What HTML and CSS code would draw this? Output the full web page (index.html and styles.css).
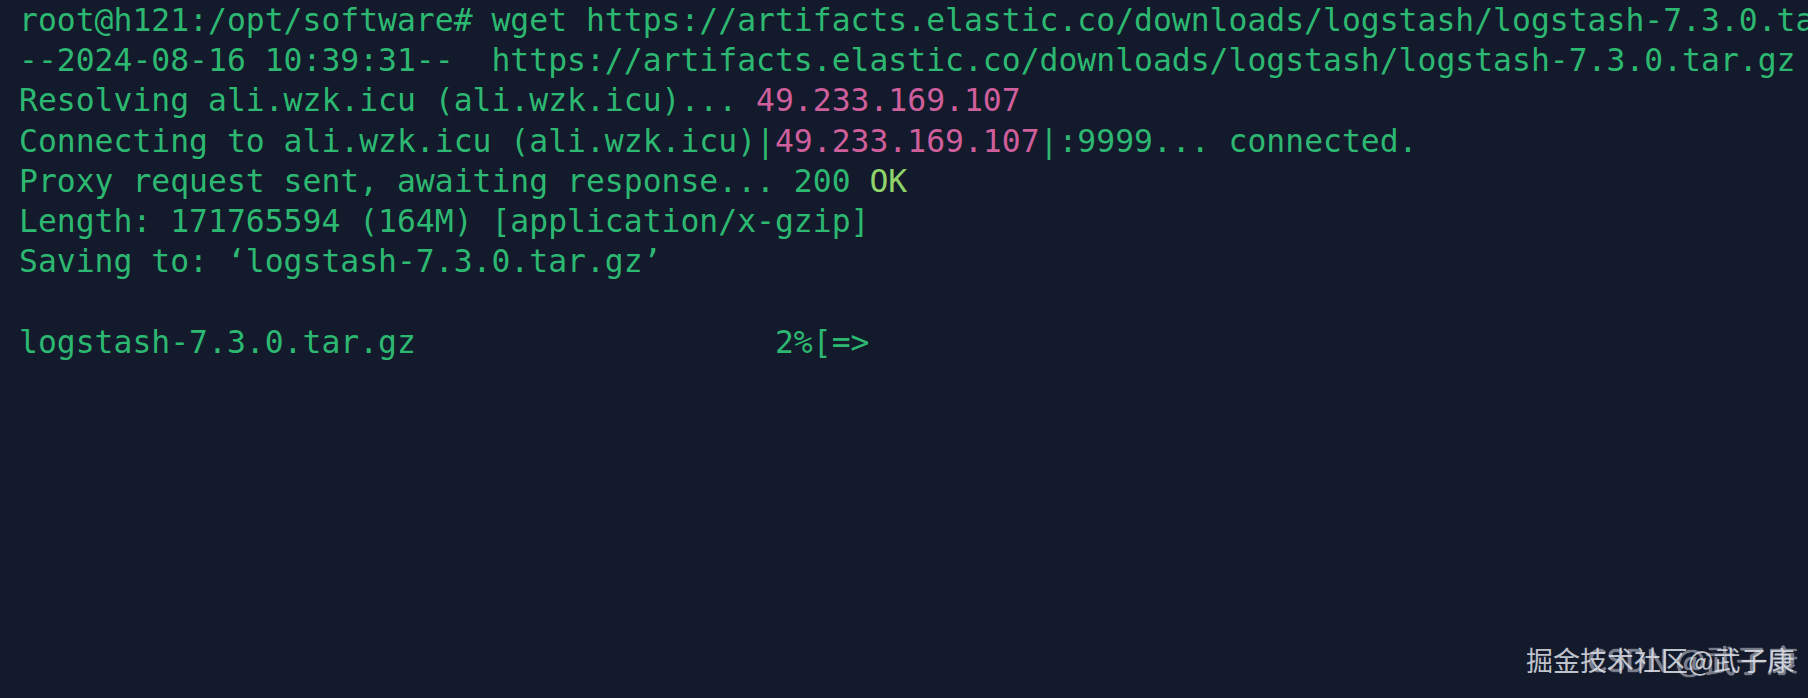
FILE: index.html
```html
<!DOCTYPE html>
<html lang="en">
<head>
  <meta charset="UTF-8" />
  <title>wget logstash</title>
  <link rel="stylesheet" href="styles.css">
</head>
<body>

<!-- ターミナル -->
  <div class="terminal">
<pre class="screen">root@h121:/opt/software# wget https://artifacts.elastic.co/downloads/logstash/logstash-7.3.0.tar.gz
--2024-08-16 10:39:31--  https://artifacts.elastic.co/downloads/logstash/logstash-7.3.0.tar.gz
Resolving ali.wzk.icu (ali.wzk.icu)... <span class="ip">49.233.169.107</span>
Connecting to ali.wzk.icu (ali.wzk.icu)|<span class="ip">49.233.169.107</span>|:9999... connected.
Proxy request sent, awaiting response... 200 <span class="ok">OK</span>
Length: 171765594 (164M) [application/x-gzip]
Saving to: ‘logstash-7.3.0.tar.gz’

logstash-7.3.0.tar.gz                   2%[=&gt;</pre>
  </div>

<!-- ウォーターマーク -->
  <div class="watermark">
    <span class="wm-ghost">CSDN @武子康</span>
    <span class="wm-main">掘金技术社区@武子康</span>
  </div>

</body>
</html>
```

FILE: styles.css
```css
    * {
      margin: 0;
      padding: 0;
      box-sizing: border-box;
    }

    html, body {
      width: 100%;
      height: 100%;
    }

    body {
      background: #131a2b;
      overflow: hidden;
      position: relative;
    }

/* ターミナル */
    .terminal {
      padding: 0 0 0 19px;
      overflow: hidden;
    }

    .screen {
      font-family: 'DejaVu Sans Mono', 'Liberation Mono', monospace;
      font-size: 31.4px;
      line-height: 40.2px;
      color: #2db872;
      white-space: pre;
    }

    .ip {
      color: #cf5f9c;
    }

    .ok {
      color: #8fd36b;
    }

/* ウォーターマーク */
    .watermark {
      position: absolute;
      right: 6px;
      bottom: 20px;
      width: 276px;
      height: 36px;
      font-family: 'Noto Sans CJK SC', 'Noto Sans', sans-serif;
    }

    .wm-main {
      position: absolute;
      left: 0;
      top: 0;
      font-size: 27px;
      line-height: 36px;
      color: rgba(225, 228, 235, 0.85);
      white-space: nowrap;
    }

    .wm-ghost {
      position: absolute;
      right: 4px;
      top: -3px;
      font-size: 31px;
      line-height: 40px;
      color: rgba(110, 115, 128, 0.9);
      text-shadow: 0 0 1px rgba(230, 232, 238, 0.9);
      white-space: nowrap;
    }
```
